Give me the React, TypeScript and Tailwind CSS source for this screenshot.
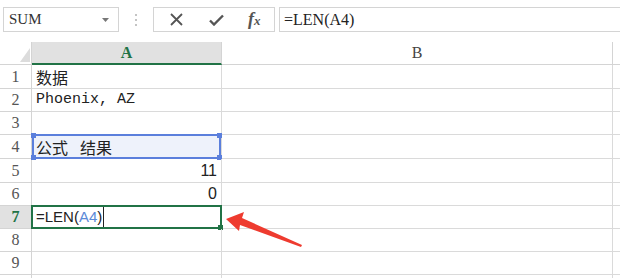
import React from "react";

const serif = "font-['Liberation_Serif','Noto_Serif_CJK_SC',serif]";
const cjk = "font-['Noto_Sans_CJK_SC',sans-serif]";
const sans = "font-['Liberation_Sans',Arial,sans-serif]";

const rowHeights = ["h-[24px]", "h-[23px]", "h-[23px]", "h-[24px]", "h-[24px]", "h-[23px]", "h-[23px]", "h-[23px]", "h-[23px]", "h-[23px]"];

function Handle({ className }: { className: string }) {
  return <span className={`absolute h-[5px] w-[5px] bg-[#5b7fdc] ${className}`} />;
}

function CellA({ row }: { row: number }) {
  if (row === 1) return <span className={`${cjk} pl-[4px] text-[16px] text-[#222]`}>数据</span>;
  if (row === 2)
    return <span className="pl-[4px] font-['Liberation_Mono',monospace] text-[15px] text-[#222]">Phoenix, AZ</span>;
  if (row === 4)
    return (
      <div className="absolute inset-x-0 top-[-1px] bottom-[-1px] border-2 border-[#5b7fdc] bg-[#eef2fb]">
        <span className={`${cjk} pl-[2px] text-[16px] leading-[21px] text-[#222]`}>
          公式<span className="ml-[12px]">结果</span>
        </span>
        <Handle className="-top-[3px] -left-[3px]" />
        <Handle className="-top-[3px] -right-[3px]" />
        <Handle className="-bottom-[3px] -left-[3px]" />
        <Handle className="-bottom-[3px] -right-[3px]" />
      </div>
    );
  if (row === 5) return <span className={`${sans} ml-auto pr-[4px] text-[16px] text-[#222]`}>11</span>;
  if (row === 6) return <span className={`${sans} ml-auto pr-[4px] text-[16px] text-[#222]`}>0</span>;
  if (row === 7)
    return (
      <div className="absolute inset-x-[-1px] top-[-1px] bottom-[-1px] flex items-center border-2 border-[#217346]">
        <span className={`${sans} pl-[3px] text-[15px] text-[#222]`}>
          =LEN(<span className="text-[#5b8ad8]">A4</span>)
        </span>
        <span className="ml-[1px] h-full w-px bg-[#222]" />
        <span className="absolute -right-[3px] -bottom-[3px] h-[5px] w-[5px] bg-[#217346]" />
      </div>
    );
  return null;
}

export default function App() {
  return (
    <div className="h-[278px] w-[620px] overflow-hidden bg-white">
      {/* formula bar */}
      <div className="flex h-[42px] items-start pt-[7px] pl-[3px]">
        <div className="flex h-[25px] w-[116px] items-center border border-[#d4d4d4] px-[5px]">
          <span className={`${serif} text-[15px] text-[#333]`}>SUM</span>
          <svg className="ml-auto mr-[4px]" width="7" height="4" viewBox="0 0 7 4">
            <path d="M0 0h7L3.5 4z" fill="#777" />
          </svg>
        </div>
        <div className="flex w-[34px] flex-col items-center gap-[3px] pt-[7px]">
          <span className="h-[2px] w-[2px] bg-[#c4c4c4]" />
          <span className="h-[2px] w-[2px] bg-[#c4c4c4]" />
          <span className="h-[2px] w-[2px] bg-[#c4c4c4]" />
        </div>
        <div className="flex h-[25px] w-[122px] items-center border border-[#d4d4d4]">
          <svg className="ml-[16px]" width="13" height="13" viewBox="0 0 13 13">
            <path d="M1 1l11 11M12 1L1 12" stroke="#555" strokeWidth="1.8" />
          </svg>
          <svg className="ml-[26px]" width="15" height="12" viewBox="0 0 15 12">
            <path d="M1 6.5l4 4 9-9" stroke="#555" strokeWidth="2.4" fill="none" />
          </svg>
          <span className={`${serif} ml-[24px] text-[18px] font-bold italic text-[#555]`}>
            f<span className="text-[13px]">x</span>
          </span>
        </div>
        <div className="ml-[4px] flex h-[25px] flex-1 items-center border-y border-l border-[#d4d4d4] pl-[4px]">
          <span className={`${serif} text-[16px] text-[#222]`}>=LEN(A4)</span>
        </div>
      </div>

      {/* sheet grid */}
      <div className="relative grid grid-cols-[32px_190px_391px_7px]">
        <div className="relative h-[23px] border-r border-b border-[#d4d4d4]">
          <svg className="absolute top-[6px] left-[20px]" width="10" height="14" viewBox="0 0 10 14">
            <path d="M10 0V14H0z" fill="#dcdcdc" />
          </svg>
        </div>
        <div className={`${serif} flex h-[23px] items-center justify-center border-r border-b-2 border-r-[#d4d4d4] border-b-[#217346] bg-[#e1e1e1] text-[16px] font-bold text-[#217346]`}>
          A
        </div>
        <div className={`${serif} flex h-[23px] items-center justify-center border-r border-b border-[#d4d4d4] text-[16px] text-[#444]`}>
          B
        </div>
        <div className="h-[23px] border-b border-[#d4d4d4]" />

        {rowHeights.map((h, i) => {
          const row = i + 1;
          const active = row === 7;
          return (
            <React.Fragment key={row}>
              <div
                className={`${serif} flex ${h} items-center justify-center border-r border-b border-[#d4d4d4] text-[16px] ${
                  active ? "bg-[#e1e1e1] font-bold text-[#217346]" : "text-[#555]"
                }`}
              >
                {row < 10 ? row : null}
              </div>
              <div className={`relative flex ${h} items-center border-r border-b border-[#dadada]`}>
                <CellA row={row} />
              </div>
              <div className={`${h} border-r border-b border-[#dadada]`} />
              <div className={`${h} border-b border-[#dadada]`} />
            </React.Fragment>
          );
        })}

        {/* red arrow annotation */}
        <svg className="absolute top-[170px] left-[222px]" width="84" height="54" viewBox="0 0 84 54">
          <path d="M4 7L22 0L20 6L80 33L79 35L18 13L17 19z" fill="#ee3b2f" />
        </svg>
      </div>
    </div>
  );
}
